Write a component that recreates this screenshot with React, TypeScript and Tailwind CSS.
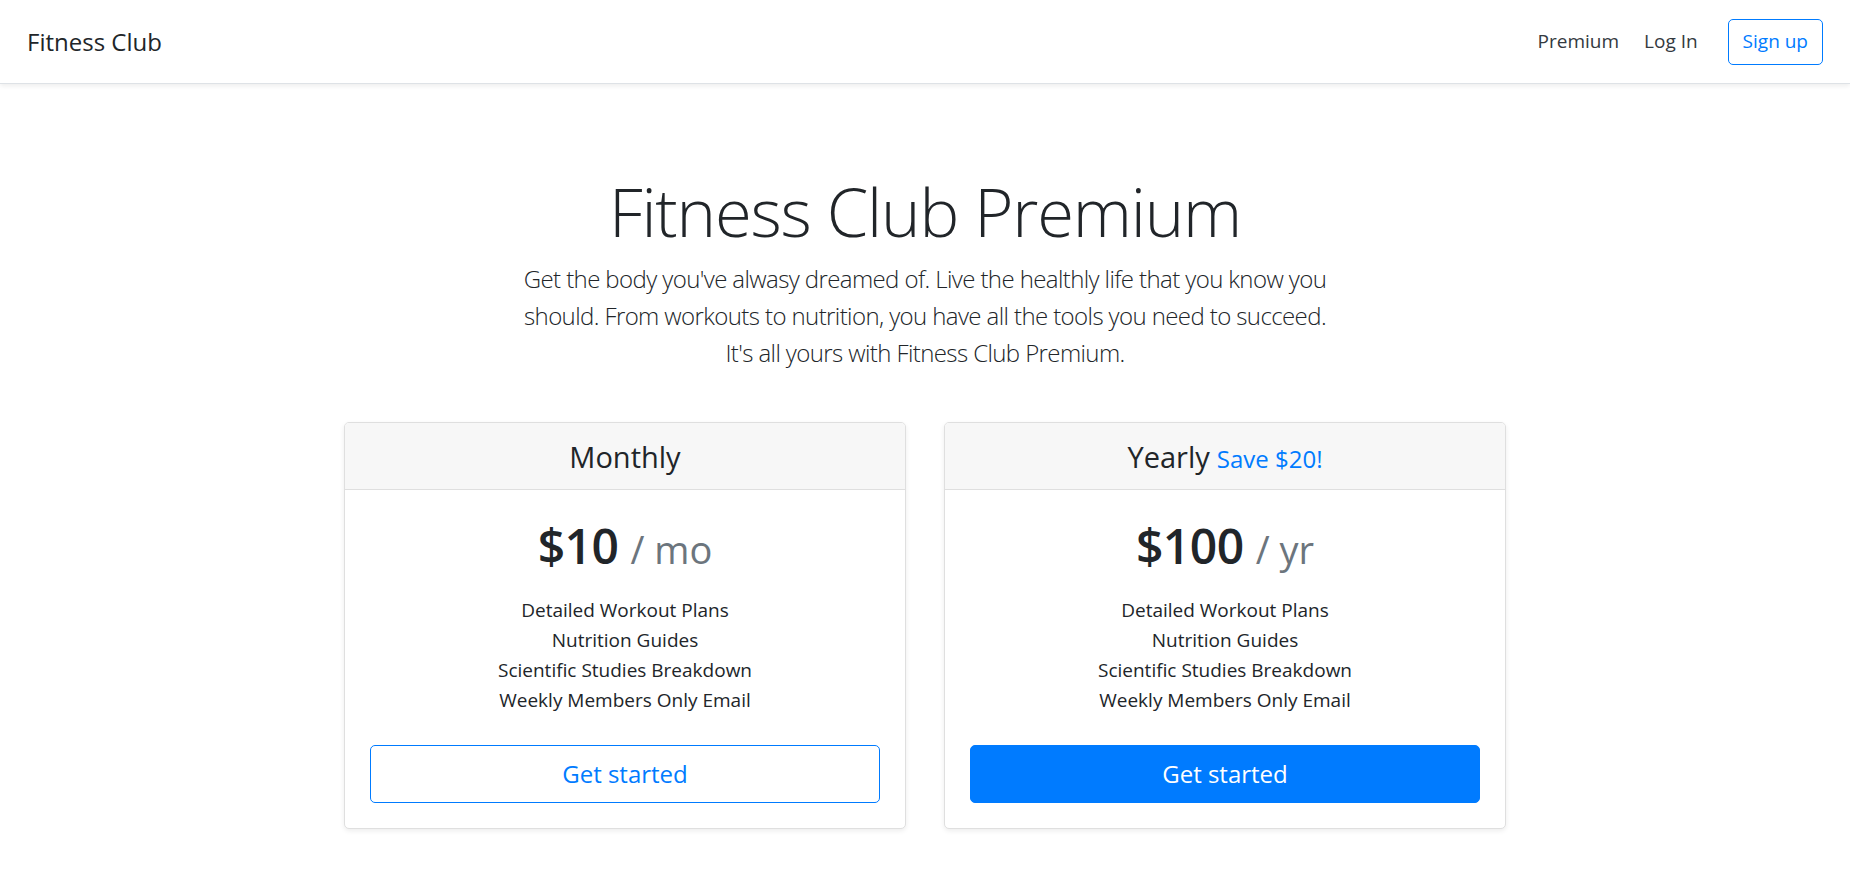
const features = [
  'Detailed Workout Plans',
  'Nutrition Guides',
  'Scientific Studies Breakdown',
  'Weekly Members Only Email',
];

const PlanCard = ({
  title,
  extra,
  price,
  unit,
  primary,
}: {
  title: string;
  extra?: string;
  price: string;
  unit: string;
  primary?: boolean;
}) => {
  return (
    <div className="flex flex-col w-[562px] border border-[#dfdfdf] rounded-[5px] bg-white shadow-[0_2px_5px_rgba(0,0,0,0.075)] overflow-hidden">
      <div className="h-[67px] flex items-center justify-center bg-[#f7f7f7] border-b border-[#dfdfdf]">
        <h4 className="text-[29px] leading-none text-[#212529]">
          {title}
          {extra && (
            <span className="text-[24px] text-[#007bff] ml-[7px]">{extra}</span>
          )}
        </h4>
      </div>
      <div className="flex flex-col items-center px-[25px] pt-[27px] pb-[25px]">
        <h1 className="text-[48px] leading-[58px] font-semibold tracking-[-0.5px] text-[#212529]">
          {price}{' '}
          <span className="text-[38px] font-normal tracking-normal text-[#6c757d]">/ {unit}</span>
        </h1>
        <ul className="mt-[17px] text-[19px] leading-[30px] text-[#212529] text-center">
          {features.map((f) => (
            <li key={f}>{f}</li>
          ))}
        </ul>
        <button
          className={`mt-[30px] w-full h-[58px] rounded-[5px] text-[24px] border ${
            primary
              ? 'bg-[#007bff] border-[#007bff] text-white'
              : 'bg-white border-[#007bff] text-[#007bff]'
          }`}
        >
          Get started
        </button>
      </div>
    </div>
  );
};

const App = () => {
  return (
    <div className="min-h-[875px] bg-white font-['Open_Sans',sans-serif] text-[#212529]">
      <nav className="h-[84px] flex items-center justify-between px-[27px] border-b border-[#dee2e6] shadow-[0_2px_5px_rgba(0,0,0,0.075)]">
        <span className="text-[24px] text-[#212529]">Fitness Club</span>
        <div className="flex items-center text-[19px]">
          <a className="px-[10px] text-[#343a40]">Premium</a>
          <a className="px-[10px] ml-[5px] text-[#343a40]">Log In</a>
          <a className="ml-[20px] h-[46px] flex items-center px-[14px] border border-[#007bff] rounded-[5px] text-[#007bff]">
            Sign up
          </a>
        </div>
      </nav>

      <div className="flex flex-col items-center pt-[87px] text-center">
        <h1 className="text-[67px] leading-[80px] font-light tracking-[-1.2px]">
          Fitness Club Premium
        </h1>
        <p className="mt-[9px] text-[24px] leading-[37px] font-light tracking-[-0.6px]">
          Get the body you've alwasy dreamed of. Live the healthly life that you know you
          <br />
          should. From workouts to nutrition, you have all the tools you need to succeed.
          <br />
          It's all yours with Fitness Club Premium.
        </p>
      </div>

      <div className="flex justify-center gap-[38px] mt-[51px]">
        <PlanCard title="Monthly" price="$10" unit="mo" />
        <PlanCard title="Yearly" extra="Save $20!" price="$100" unit="yr" primary />
      </div>
    </div>
  );
};

export default App;
